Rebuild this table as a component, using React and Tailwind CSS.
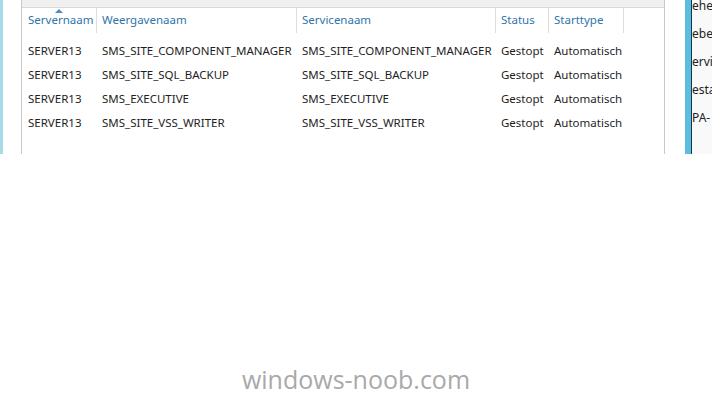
import React from 'react';

const rows = [
  ['SERVER13', 'SMS_SITE_COMPONENT_MANAGER', 'SMS_SITE_COMPONENT_MANAGER', 'Gestopt', 'Automatisch'],
  ['SERVER13', 'SMS_SITE_SQL_BACKUP', 'SMS_SITE_SQL_BACKUP', 'Gestopt', 'Automatisch'],
  ['SERVER13', 'SMS_EXECUTIVE', 'SMS_EXECUTIVE', 'Gestopt', 'Automatisch'],
  ['SERVER13', 'SMS_SITE_VSS_WRITER', 'SMS_SITE_VSS_WRITER', 'Gestopt', 'Automatisch'],
];

const headers = ['Servernaam', 'Weergavenaam', 'Servicenaam', 'Status', 'Starttype', ''];

const sideLinks = ['ehee', 'ebe', 'ervic', 'esta', 'PA-'];

const cols = 'grid grid-cols-[75px_200px_199px_53px_75px_40px]';

export default function App() {
  return (
    <div
      className="w-[712px] h-[396px] bg-white overflow-hidden flex flex-col"
      style={{ fontFamily: '"Noto Sans", "Open Sans", sans-serif' }}
    >
      <div className="flex h-[154px]">
        <div className="w-[3px] bg-[#a8dbea]" />
        <div className="w-[18px]" />

        {/* services table */}
        <div className="w-[644px] border-x border-[#c9c9c9] flex flex-col">
          <div className="h-[8px] bg-[#f0f0f0] border-b border-[#d9d9d9]" />
          <div className={`${cols} h-[25px] text-[11.5px] leading-[21px] text-[#2f75aa]`}>
            {headers.map((h, i) => (
              <div key={i} className="relative border-r border-[#dedede] pl-[5px] first:pl-[6px] pt-[1px] last:border-r-0">
                {i === 0 ? (
                  <span className="absolute left-1/2 -translate-x-1/2 top-[1px] w-0 h-0 border-x-[4px] border-x-transparent border-b-[4px] border-b-[#4d8cc4]" />
                ) : null}
                {h}
              </div>
            ))}
          </div>
          <div className="pt-[5px] text-[11.5px] text-[#1e1e1e]">
            {rows.map((r, i) => (
              <div key={i} className={`${cols} h-[24px] leading-[26px]`}>
                {r.map((c, j) => (
                  <div key={j} className="pl-[5px] first:pl-[6px] whitespace-nowrap">
                    {c}
                  </div>
                ))}
                <div />
              </div>
            ))}
          </div>
        </div>

        <div className="w-[20px]" />
        <div className="w-[6px] bg-[#5bbde0]" />
        <div className="w-[1px] bg-[#1d3644]" />
        <div className="flex-1 bg-[#f9f9f9] overflow-hidden text-[12px] text-[#222] leading-[28px] -mt-[8px]">
          {sideLinks.map((t) => (
            <div key={t} className="whitespace-nowrap">
              {t}
            </div>
          ))}
        </div>
      </div>

      <div className="flex-1 flex items-end justify-center pb-[2px]">
        <span className="text-[25px] leading-[30px] text-[#a9a9a9]" style={{ fontFamily: '"Open Sans", sans-serif' }}>
          windows-noob.com
        </span>
      </div>
    </div>
  );
}
